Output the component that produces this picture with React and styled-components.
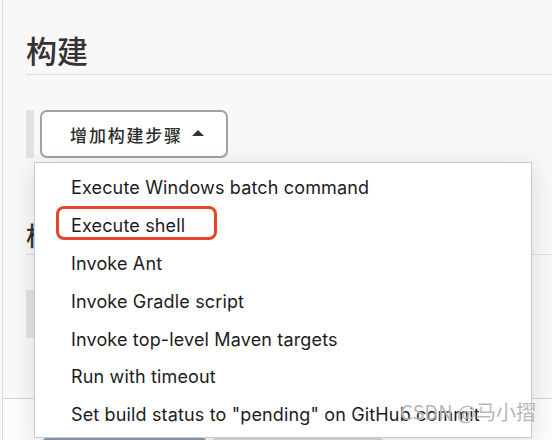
import React from "react";
import styled, { createGlobalStyle } from "styled-components";

const Global = createGlobalStyle`
  html, body {
    margin: 0;
    padding: 0;
    background: #f8f8f8;
    overflow: hidden;
  }
  body {
    font-family: Inter, "Noto Sans CJK SC", sans-serif;
    color: #333;
  }
`;

const Page = styled.div`
  position: relative;
  height: 440px;
  margin-left: 2px;
  border-left: 1px solid #dcdcdc;
  padding-left: 23px;
  overflow: hidden;
`;

const Section = styled.section`
  padding-top: ${({ top }) => top}px;
`;

const Heading = styled.h2`
  margin: 0;
  font-family: "Noto Sans CJK SC", sans-serif;
  font-size: ${({ size }) => size}px;
  line-height: ${({ size }) => size}px;
  font-weight: 500;
  color: #333;
  padding-bottom: ${({ pad }) => pad}px;
  border-bottom: 1px solid #dedede;
`;

const ButtonRow = styled.div`
  position: relative;
  margin-top: 35px;
  height: 48px;
  border-left: 8px solid #e3e3e3;
  padding-left: 6px;
  display: flex;
  align-items: stretch;
`;

const AddButton = styled.button`
  box-sizing: border-box;
  width: 188px;
  height: 48px;
  display: flex;
  align-items: center;
  justify-content: center;
  gap: 9px;
  background: #fff;
  border: 2px solid #9aa4ad;
  border-radius: 7px;
  font-family: "Noto Sans CJK SC", sans-serif;
  font-size: 17px;
  font-weight: 500;
  letter-spacing: 1.8px;
  color: #2b2b2b;
  padding: 0 0 0 6px;
  cursor: pointer;
`;

const Caret = styled.span`
  width: 0;
  height: 0;
  border-left: 6px solid transparent;
  border-right: 6px solid transparent;
  border-bottom: 6px solid #333;
  margin-top: -2px;
`;

const Menu = styled.ul`
  position: absolute;
  left: 0;
  top: 52px;
  z-index: 3;
  box-sizing: border-box;
  width: 498px;
  height: 276px;
  margin: 0;
  padding: 6px 0 0;
  list-style: none;
  background: #fff;
  border: 1px solid #cbcbcb;
  box-shadow: 0 4px 22px rgba(0, 0, 0, 0.12);
`;

const Item = styled.li`
  height: 37.8px;
  display: flex;
  align-items: center;
  padding-left: 36px;
  font-family: Inter, "Liberation Sans", sans-serif;
  font-size: 18px;
  letter-spacing: 0.15px;
  color: #1c1c1c;
  white-space: nowrap;
`;

const Marked = styled.span`
  position: relative;

  &::before {
    content: "";
    position: absolute;
    left: -15px;
    right: -32px;
    top: -9px;
    bottom: -4px;
    border: 3px solid #e8432c;
    border-radius: 8px;
  }
`;

const Footer = styled.div`
  margin-top: 60px;
  margin-left: -23px;
  height: 60px;
  background: #fcfcfc;
  border-top: 1px solid #d6d6d6;
  display: flex;
  gap: 7px;
  padding: 39px 0 0 40px;
`;

const FooterButton = styled.div`
  width: ${({ w }) => w}px;
  height: 30px;
  border-radius: 3px;
  background: ${({ primary }) => (primary ? "#8c9cac" : "#dadada")};
`;

const Watermark = styled.div`
  position: absolute;
  right: 16px;
  bottom: 14px;
  z-index: 5;
  font-family: "Noto Sans CJK SC", sans-serif;
  font-size: 20px;
  color: rgba(150, 150, 150, 0.7);
  text-shadow: 0 0 1px rgba(255, 255, 255, 0.9);
  pointer-events: none;
`;

const items = [
  "Execute Windows batch command",
  "Execute shell",
  "Invoke Ant",
  "Invoke Gradle script",
  "Invoke top-level Maven targets",
  "Run with timeout",
  'Set build status to "pending" on GitHub commit',
];

export default function App() {
  return (
    <Page>
      <Global />
      <Section top={34}>
        <Heading size={31} pad={9}>构建</Heading>
        <ButtonRow>
          <AddButton>
            增加构建步骤
            <Caret />
          </AddButton>
          <Menu>
            {items.map((label) => (
              <Item key={label}>
                {label === "Execute shell" ? <Marked>{label}</Marked> : label}
              </Item>
            ))}
          </Menu>
        </ButtonRow>
      </Section>
      <Section top={64}>
        <Heading size={26} pad={6}>构建后操作</Heading>
        <ButtonRow>
          <AddButton>
            增加构建后操作步骤
            <Caret />
          </AddButton>
        </ButtonRow>
      </Section>
      <Footer>
        <FooterButton primary w={163} />
        <FooterButton w={170} />
      </Footer>
      <Watermark>CSDN @马小摺</Watermark>
    </Page>
  );
}
